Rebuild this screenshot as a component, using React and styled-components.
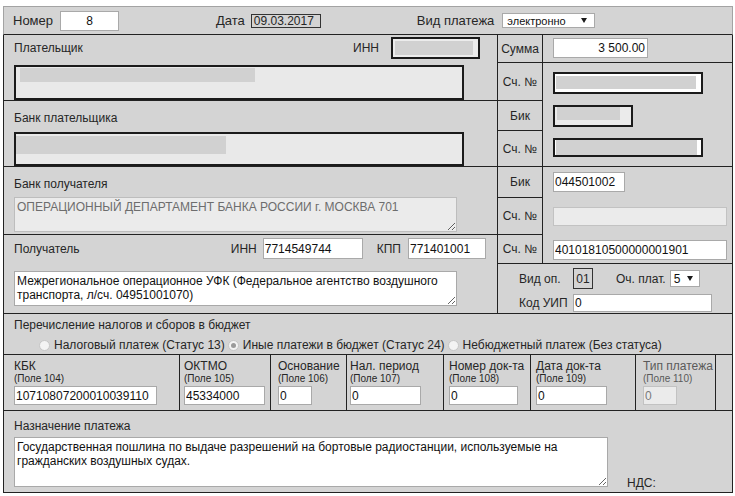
import styled, { createGlobalStyle } from "styled-components";

const LINE = "#222";

const GlobalStyle = createGlobalStyle`
  html, body { margin: 0; padding: 0; background: #ffffff; }
  body { font-family: "Liberation Sans", Arial, sans-serif; }
`;

const Form = styled.div`
  width: 730px;
  margin: 6px 0 0 3px;
  background: #d4d4d4;
  color: #262626;
  font-family: "Liberation Sans", Arial, sans-serif;
  font-size: 12px;
  line-height: 14px;
`;

/* top bar */
const Header = styled.div`
  box-sizing: border-box;
  height: 29px;
  display: flex;
  align-items: center;
  padding-left: 9px;
  border: 1px solid #a3a3a3;
  border-bottom-color: ${LINE};
  font-size: 13px;
`;

const HeadLabel = styled.span`
  margin-left: ${(p) => p.$gap || 0}px;
  margin-right: ${(p) => p.$space}px;
  white-space: nowrap;
`;

const DateBox = styled.span`
  box-sizing: border-box;
  width: 70px;
  height: 14px;
  padding: 0 2px;
  border: 1px solid #333;
  font-size: 12px;
  line-height: 12px;
`;

const Select = styled.div`
  box-sizing: border-box;
  display: flex;
  align-items: center;
  justify-content: space-between;
  width: ${(p) => p.$w}px;
  height: ${(p) => p.$h}px;
  margin-left: ${(p) => p.$ml || 0}px;
  padding: 0 ${(p) => p.$pr}px 0 ${(p) => p.$pl}px;
  background: #fff;
  border: 1px solid #a9a9a9;
  font-size: ${(p) => p.$fs}px;
  color: #111;
  &::after {
    content: "";
    border-left: 3px solid transparent;
    border-right: 3px solid transparent;
    border-top: 5px solid #1a1a1a;
  }
`;

/* inputs */
const Field = styled.input`
  box-sizing: border-box;
  display: block;
  width: ${(p) => p.$w}px;
  height: ${(p) => p.$h || 20}px;
  margin: 0;
  margin-top: ${(p) => p.$mt || 0}px;
  padding: 0 ${(p) => p.$pr || 1}px 0 1px;
  border: 1px solid ${(p) => (p.$off ? "#c2c2c2" : "#a9a9a9")};
  background: ${(p) => (p.$off ? "#ebebeb" : "#fff")};
  color: ${(p) => (p.$off ? "#7a7a7a" : "#111")};
  font: 12px "Liberation Sans", Arial, sans-serif;
  text-align: ${(p) => p.$align || "left"};
  outline: none;
`;

const Area = styled.textarea`
  box-sizing: border-box;
  display: block;
  width: ${(p) => p.$w}px;
  height: ${(p) => p.$h}px;
  margin: ${(p) => p.$mt || 0}px 0 0;
  padding: 2px;
  border: 1px solid ${(p) => (p.$off ? "#bdbdbd" : "#a9a9a9")};
  background: ${(p) => (p.$off ? "#ebebeb" : "#fff")};
  color: ${(p) => (p.$off ? "#6d6d6d" : "#111")};
  font: 12px/14px "Liberation Sans", Arial, sans-serif;
  overflow: hidden;
  resize: both;
  outline: none;
`;

/* hidden (blurred) data */
const Masked = styled.div`
  box-sizing: border-box;
  width: ${(p) => p.$w}px;
  height: ${(p) => p.$h}px;
  margin-top: ${(p) => p.$mt || 0}px;
  padding: ${(p) => p.$bt}px 0 0 ${(p) => p.$bl}px;
  border: 2px solid #1b1b1b;
  background: ${(p) => p.$bg || "#fff"};
  overflow: hidden;
`;

const Bar = styled.div`
  width: ${(p) => p.$w}px;
  height: ${(p) => p.$h}px;
  background: #d1d1d1;
`;

/* main grid */
const Body = styled.div`
  border: 1px solid ${LINE};
  border-top: none;
`;

const Grid = styled.div`
  display: grid;
  grid-template-columns: 494px 45px 189px;
  grid-template-rows: 28px 38px 30px 36px 31px 37px 29px 50px;
`;

const Party = styled.div`
  grid-column: 1;
  grid-row: ${(p) => p.$row} / span 2;
  box-sizing: border-box;
  padding: ${(p) => p.$pt}px 0 0 10px;
  border-right: 1px solid ${LINE};
  border-bottom: 1px solid ${LINE};
`;

const PartyHead = styled.div`
  display: flex;
  align-items: center;
  padding-right: ${(p) => p.$pr}px;
`;

const Title = styled.span`
  flex: 1;
  white-space: nowrap;
`;

const InlineLabel = styled.span`
  margin: 0 ${(p) => p.$space}px 0 ${(p) => p.$gap || 0}px;
  white-space: nowrap;
`;

const Key = styled.div`
  grid-column: 2;
  grid-row: ${(p) => p.$row};
  box-sizing: border-box;
  display: flex;
  align-items: center;
  justify-content: center;
  border-right: 1px solid ${LINE};
  border-bottom: 1px solid ${LINE};
  white-space: nowrap;
`;

const Value = styled.div`
  grid-column: 3;
  grid-row: ${(p) => p.$row};
  box-sizing: border-box;
  padding: ${(p) => p.$pt}px 0 0 10px;
  border-bottom: ${(p) => (p.$open ? "none" : `1px solid ${LINE}`)};
`;

const OpCell = styled.div`
  grid-column: 2 / span 2;
  grid-row: 8;
  box-sizing: border-box;
  display: grid;
  grid-template-columns: 54px auto;
  grid-auto-rows: min-content;
  row-gap: 5px;
  align-items: center;
  padding: 4px 0 0 21px;
  border-bottom: 1px solid ${LINE};
`;

const OpLine = styled.div`
  display: flex;
  align-items: center;
`;

const CodeBox = styled.span`
  box-sizing: border-box;
  width: 20px;
  height: 21px;
  border: 1px solid #333;
  display: flex;
  align-items: center;
  justify-content: center;
`;

/* budget */
const Budget = styled.div`
  box-sizing: border-box;
  height: 41px;
  padding: 4px 0 0 10px;
  border-bottom: 1px solid ${LINE};
`;

const RadioRow = styled.div`
  display: flex;
  align-items: center;
  margin-top: 6px;
  padding-left: 22px;
  white-space: nowrap;
`;

const RadioItem = styled.span`
  display: flex;
  align-items: center;
`;

const RadioMark = styled.span`
  box-sizing: border-box;
  width: 11px;
  height: 11px;
  margin: 0 4px 0 3px;
  border-radius: 50%;
  border: 1px solid #c6c6c6;
  background: #f3f3f3;
  display: flex;
  align-items: center;
  justify-content: center;
  &::after {
    content: "";
    width: 5px;
    height: 5px;
    border-radius: 50%;
    background: ${(p) => (p.$on ? "#9a9a9a" : "transparent")};
  }
`;

/* codes row */
const CodeRow = styled.div`
  box-sizing: border-box;
  display: flex;
  height: 56px;
  border-bottom: 1px solid ${LINE};
`;

const CodeCell = styled.div`
  box-sizing: border-box;
  flex: none;
  width: ${(p) => p.$w}px;
  padding: 4px 0 0 ${(p) => p.$pl}px;
  border-right: ${(p) => (p.$last ? "none" : `1px solid ${LINE}`)};
  color: ${(p) => (p.$off ? "#5a5a5a" : "inherit")};
`;

const CodeTitle = styled.div`
  white-space: nowrap;
`;

const CodeHint = styled.div`
  font-size: 10px;
  line-height: 12px;
  white-space: nowrap;
`;

/* purpose */
const Purpose = styled.div`
  padding: 8px 0 5px 10px;
`;

const PurposeRow = styled.div`
  display: flex;
  align-items: flex-end;
  margin-top: 4px;
`;

const Vat = styled.span`
  margin: 0 0 -3px 19px;
`;

const codes = [
  { title: "КБК", hint: "(Поле 104)", value: "10710807200010039110", w: 176, pl: 10, fw: 143 },
  { title: "ОКТМО", hint: "(Поле 105)", value: "45334000", w: 91, pl: 4, fw: 81 },
  { title: "Основание", hint: "(Поле 106)", value: "0", w: 76, pl: 7, fw: 34 },
  { title: "Нал. период", hint: "(Поле 107)", value: "0", w: 97, pl: 3, fw: 71 },
  { title: "Номер док-та", hint: "(Поле 108)", value: "0", w: 87, pl: 5, fw: 69 },
  { title: "Дата док-та", hint: "(Поле 109)", value: "0", w: 105, pl: 5, fw: 71 },
  { title: "Тип платежа", hint: "(Поле 110)", value: "0", w: 80, pl: 7, fw: 34, off: true },
];

const radios = [
  { label: "Налоговый платеж (Статус 13)", on: false },
  { label: "Иные платежи в бюджет (Статус 24)", on: true },
  { label: "Небюджетный платеж (Без статуса)", on: false },
];

export default function App() {
  return (
    <>
      <GlobalStyle />
      <Form>
        <Header>
          <HeadLabel $space={7}>Номер</HeadLabel>
          <Field $w={59} $h={20} $align="center" defaultValue="8" readOnly />
          <HeadLabel $gap={97} $space={6}>Дата</HeadLabel>
          <DateBox>09.03.2017</DateBox>
          <HeadLabel $gap={96} $space={8}>Вид платежа</HeadLabel>
          <Select $w={93} $h={15} $pl={4} $pr={7} $fs={11}>электронно</Select>
        </Header>

        <Body>
          <Grid>
            <Party $row={1} $pt={2}>
              <PartyHead $pr={17}>
                <Title>Плательщик</Title>
                <InlineLabel $space={12}>ИНН</InlineLabel>
                <Masked $w={89} $h={22} $bg="#ececec" $bt={2} $bl={2}>
                  <Bar $w={78} $h={14} />
                </Masked>
              </PartyHead>
              <Masked $w={450} $h={35} $mt={6} $bg="#e9e9e9" $bt={1} $bl={4}>
                <Bar $w={235} $h={14} />
              </Masked>
            </Party>

            <Key $row={1}>Сумма</Key>
            <Value $row={1} $pt={3}>
              <Field $w={95} $h={20} $align="right" $pr={2} defaultValue="3 500.00" readOnly />
            </Value>
            <Key $row={2}>Сч. №</Key>
            <Value $row={2} $pt={9} $open>
              <Masked $w={150} $h={22} $bt={2} $bl={1}>
                <Bar $w={140} $h={13} />
              </Masked>
            </Value>

            <Party $row={3} $pt={10}>
              <Title>Банк плательщика</Title>
              <Masked $w={450} $h={34} $mt={7} $bg="#e9e9e9" $bt={2} $bl={0}>
                <Bar $w={210} $h={18} />
              </Masked>
            </Party>

            <Key $row={3}>Бик</Key>
            <Value $row={3} $pt={4} $open>
              <Masked $w={80} $h={22} $bg="#ebebeb" $bt={0} $bl={2}>
                <Bar $w={63} $h={13} />
              </Masked>
            </Value>
            <Key $row={4}>Сч. №</Key>
            <Value $row={4} $pt={7}>
              <Masked $w={150} $h={19} $bt={0} $bl={1}>
                <Bar $w={141} $h={15} />
              </Masked>
            </Value>

            <Party $row={5} $pt={10}>
              <Title>Банк получателя</Title>
              <Area
                $w={443}
                $h={35}
                $mt={6}
                $off
                readOnly
                defaultValue="ОПЕРАЦИОННЫЙ ДЕПАРТАМЕНТ БАНКА РОССИИ г. МОСКВА 701"
              />
            </Party>

            <Key $row={5}>Бик</Key>
            <Value $row={5} $pt={5} $open>
              <Field $w={72} $h={20} defaultValue="044501002" readOnly />
            </Value>
            <Key $row={6}>Сч. №</Key>
            <Value $row={6} $pt={9} $open>
              <Field $w={174} $h={19} $off defaultValue="" readOnly />
            </Value>

            <Party $row={7} $pt={3}>
              <PartyHead $pr={11}>
                <Title>Получатель</Title>
                <InlineLabel $space={6}>ИНН</InlineLabel>
                <Field $w={100} $h={21} defaultValue="7714549744" readOnly />
                <InlineLabel $gap={14} $space={7}>КПП</InlineLabel>
                <Field $w={78} $h={21} defaultValue="771401001" readOnly />
              </PartyHead>
              <Area
                $w={443}
                $h={35}
                $mt={12}
                readOnly
                defaultValue="Межрегиональное операционное УФК (Федеральное агентство воздушного транспорта, л/сч. 04951001070)"
              />
            </Party>

            <Key $row={7}>Сч. №</Key>
            <Value $row={7} $pt={5}>
              <Field $w={174} $h={20} defaultValue="40101810500000001901" readOnly />
            </Value>

            <OpCell>
              <span>Вид оп.</span>
              <OpLine>
                <CodeBox>01</CodeBox>
                <InlineLabel $gap={23} $space={0}>Оч. плат.</InlineLabel>
                <Select $w={30} $h={17} $ml={4} $pl={3} $pr={6} $fs={12}>5</Select>
              </OpLine>
              <span>Код УИП</span>
              <Field $w={139} $h={18} defaultValue="0" readOnly />
            </OpCell>
          </Grid>

          <Budget>
            <div>Перечисление налогов и сборов в бюджет</div>
            <RadioRow>
              {radios.map((r) => (
                <RadioItem key={r.label}>
                  <RadioMark $on={r.on} />
                  {r.label}
                </RadioItem>
              ))}
            </RadioRow>
          </Budget>

          <CodeRow>
            {codes.map((c) => (
              <CodeCell key={c.title} $w={c.w} $pl={c.pl} $off={c.off}>
                <CodeTitle>{c.title}</CodeTitle>
                <CodeHint>{c.hint}</CodeHint>
                <Field $w={c.fw} $h={19} $mt={1} $off={c.off} defaultValue={c.value} readOnly />
              </CodeCell>
            ))}
            <CodeCell $w={16} $pl={0} $last />
          </CodeRow>

          <Purpose>
            <div>Назначение платежа</div>
            <PurposeRow>
              <Area
                $w={594}
                $h={50}
                readOnly
                defaultValue="Государственная пошлина по выдаче разрешений на бортовые радиостанции, используемые на гражданских воздушных судах."
              />
              <Vat>НДС:</Vat>
            </PurposeRow>
          </Purpose>
        </Body>
      </Form>
    </>
  );
}
